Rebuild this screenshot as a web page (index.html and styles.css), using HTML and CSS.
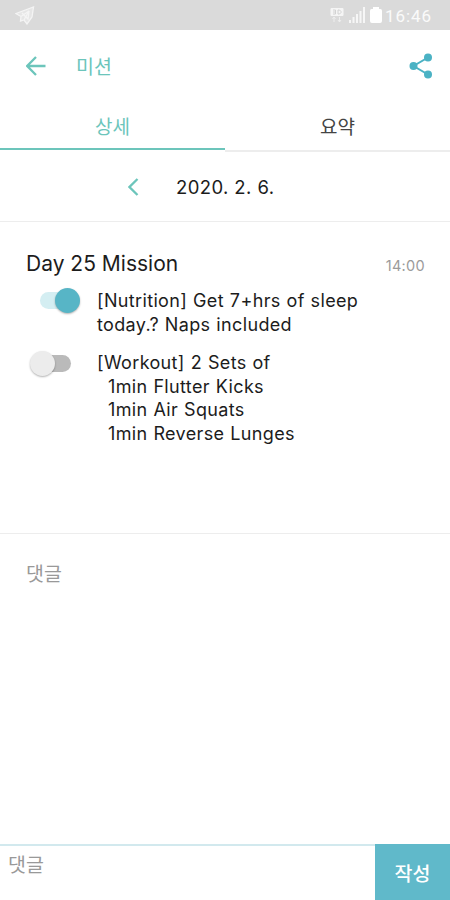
FILE: index.html
```html
<!DOCTYPE html>
<html lang="ko">
<head>
    <meta charset="UTF-8">
    <meta name="viewport" content="width=device-width, initial-scale=1.0">
    <title>미션</title>
    <link rel="stylesheet" href="styles.css">
</head>
<body>
    <div class="status-bar">
        <svg class="nav-icon" width="20" height="19" viewBox="0 0 20 19">
            <path d="M1 7.500L18.500 1L17 11L12 18L9 14L5.500 15L6 10.500Z" />
            <path d="M6 10.500L14 5L9 14M7 7L13 13L14 5" />
        </svg>
        <div class="status-right">
            <svg class="network" width="14" height="17" viewBox="0 0 14 17">
                <rect x="0.500" y="1" width="13" height="8" rx="1" fill="#f5f5f5" />
                <path d="M3 3H5.500V7H3M3 5H5.500M8 3V7M8 3H9.500L11 4.500V5.500L9.500 7H8" stroke="#d2d2d2" fill="none" />
                <path d="M4 10V15M2.500 12L4 10L5.500 12M9.500 10V15M8 13L9.500 15L11 13" stroke="#eeeeee" fill="none" />
            </svg>
            <svg class="signal" width="16" height="16" viewBox="0 0 16 16" fill="#f6f6f6">
                <rect x="0" y="13" width="2" height="3" />
                <rect x="3.500" y="10" width="2" height="6" />
                <rect x="7" y="7" width="2" height="9" />
                <rect x="10.500" y="4" width="2" height="12" />
                <rect x="14" y="0" width="2" height="16" />
            </svg>
            <svg class="battery" width="12" height="16" viewBox="0 0 12 16">
                <path d="M3 0H9V2H10.500Q12 2 12 4V14Q12 16 10 16H2Q0 16 0 14V4Q0 2 1.500 2H3Z" fill="#fff" />
            </svg>
            <span class="clock">16:46</span>
        </div>
    </div>

    <header class="app-bar">
        <svg class="back" width="20" height="20" viewBox="0 0 20 20">
            <path d="M19.500 10H1.500M10 1L1.200 10L10 19" />
        </svg>
        <h1 class="page-title">미션</h1>
        <svg class="share" width="24" height="26" viewBox="0 0 24 26">
            <path d="M19 4.500L4.500 13L19 21.500" />
            <circle cx="19" cy="4.500" r="4" />
            <circle cx="4.500" cy="13" r="4" />
            <circle cx="19" cy="21.500" r="4" />
        </svg>
    </header>

    <nav class="tabs">
        <div class="tab active">상세</div>
        <div class="tab">요약</div>
    </nav>

    <div class="date-bar">
        <svg class="prev" width="11" height="18" viewBox="0 0 11 18">
            <path d="M9.500 1L1.500 9L9.500 17" />
        </svg>
        <span class="date">2020. 2. 6.</span>
    </div>

    <section class="mission">
        <div class="mission-head">
            <h2 class="mission-title">Day 25 Mission</h2>
            <span class="mission-time">14:00</span>
        </div>
        <div class="task">
            <div class="switch on"><span class="knob"></span></div>
            <p class="task-text">[Nutrition] Get 7+hrs of sleep<br>today.? Naps included</p>
        </div>
        <div class="task">
            <div class="switch"><span class="knob"></span></div>
            <div class="task-text">
                <p>[Workout] 2 Sets of</p>
                <ul class="sets">
                    <li>1min Flutter Kicks</li>
                    <li>1min Air Squats</li>
                    <li>1min Reverse Lunges</li>
                </ul>
            </div>
        </div>
    </section>

    <section class="comments">댓글</section>

    <footer class="comment-form">
        <div class="comment-input">댓글</div>
        <button type="button" class="submit">작성</button>
    </footer>
</body>
</html>
```
FILE: styles.css
```css
* {
    box-sizing: border-box;
}

body {
    margin: 0;
    height: 900px;
    display: flex;
    flex-direction: column;
    overflow: hidden;
    background: #fff;
    color: #1c1c1c;
    font-family: Inter, "Noto Sans CJK KR", sans-serif;
}

h1, h2, p, ul {
    margin: 0;
    padding: 0;
    font-weight: 400;
}

svg {
    display: block;
    flex: none;
}

.status-bar {
    height: 30px;
    flex: none;
    display: flex;
    justify-content: space-between;
    align-items: center;
    padding: 0 18px 0 15px;
    background: #dadada;
}

.nav-icon {
    fill: #e6e6e6;
    stroke: #f4f4f4;
    stroke-width: 1.3;
}

.status-right {
    display: flex;
    align-items: center;
}

.signal {
    margin-left: 5px;
}

.battery {
    margin-left: 5px;
}

.clock {
    margin-left: 3px;
    width: 47px;
    color: #fafafa;
    font-family: Roboto, sans-serif;
    font-size: 17px;
    letter-spacing: 0.9px;
    line-height: 28px;
    padding-top: 2px;
}

.app-bar {
    height: 72px;
    flex: none;
    display: flex;
    align-items: center;
    padding: 0 17px 0 26px;
}

.back, .prev {
    fill: none;
    stroke: #6cc5bb;
    stroke-width: 2.3;
}

.page-title {
    margin-left: 30px;
    padding-top: 1px;
    color: #6cc5bb;
    font-size: 19.5px;
    line-height: 28px;
}

.share {
    margin-left: auto;
    fill: #4bb2c4;
    stroke: #4bb2c4;
}

.share path {
    fill: none;
    stroke-width: 2;
}

.share circle {
    stroke: none;
}

.tabs {
    height: 50px;
    flex: none;
    display: flex;
}

.tab {
    flex: 1;
    text-align: center;
    font-size: 19px;
    line-height: 51px;
    color: #444;
    border-bottom: 2px solid #ededed;
}

.tab.active {
    color: #6cc5bb;
    border-bottom-color: #6cc5bb;
    height: 48px;
}

.date-bar {
    height: 70px;
    flex: none;
    display: flex;
    align-items: center;
    padding-left: 128px;
    border-bottom: 1px solid #ededed;
}

.date {
    margin-left: 37px;
    font-size: 18.5px;
    letter-spacing: 0.4px;
}

.mission {
    height: 312px;
    flex: none;
    padding: 29px 25px 0 26px;
    border-bottom: 1px solid #ededed;
}

.mission-head {
    display: flex;
    justify-content: space-between;
    align-items: baseline;
    line-height: 26px;
    margin-bottom: 10px;
}

.mission-title {
    font-size: 21px;
}

.mission-time {
    color: #9b9b9b;
    font-size: 14.5px;
    letter-spacing: 0.3px;
}

.task {
    display: flex;
    margin-bottom: 15px;
}

.task-text {
    font-size: 18px;
    line-height: 23.6px;
    letter-spacing: 0.35px;
    word-spacing: 0.5px;
}

.sets {
    list-style: none;
    padding-left: 11px;
}

.switch {
    flex: none;
    width: 33px;
    height: 17px;
    margin: 4px 26px 0 12px;
    border-radius: 9px;
    background: #bababa;
    position: relative;
}

.switch.on {
    margin-top: 3px;
    margin-left: 14px;
    margin-right: 24px;
    background: #d4eef2;
}

.knob {
    position: absolute;
    top: -4px;
    left: -8px;
    width: 25px;
    height: 25px;
    border-radius: 50%;
    background: #ececec;
    box-shadow: 0 1px 2px rgba(0, 0, 0, 0.3);
}

.switch.on .knob {
    left: 15px;
    background: #57b5c6;
}

.comments {
    flex: 1;
    padding: 26px 26px;
    color: #999;
    font-size: 19.5px;
    line-height: 28px;
}

.comment-form {
    height: 56px;
    flex: none;
    display: flex;
}

.comment-input {
    flex: 1;
    padding: 5px 8px;
    border-top: 2px solid #d2e9ee;
    color: #999;
    font-size: 19.5px;
    line-height: 28px;
}

.submit {
    width: 75px;
    border: none;
    padding: 1px 0 0;
    background: #60b9ca;
    color: #fff;
    font-family: inherit;
    font-size: 19.5px;
    font-weight: 500;
}
```
